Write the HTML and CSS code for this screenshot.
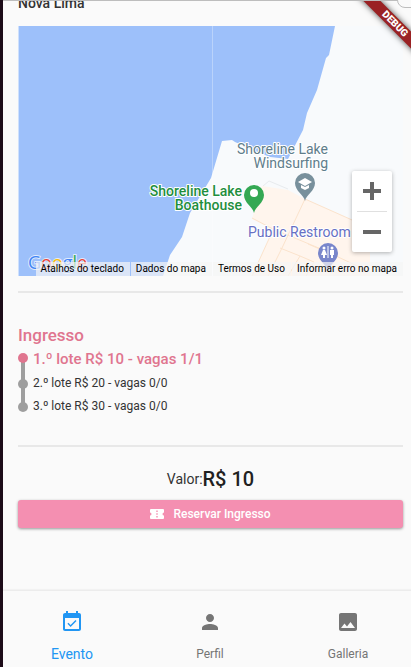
FILE: index.html
```html
<!DOCTYPE html>
<html lang="pt-BR">
<head>
<meta charset="utf-8">
<meta name="viewport" content="width=device-width, initial-scale=1">
<title>Evento</title>
<link rel="stylesheet" href="styles.css">
</head>
<body>
<div class="app">
  <span class="window-corner"></span>
  <div class="debug-clip"><span class="debug">DEBUG</span></div>
  <main class="content">
    <p class="city">Nova Lima</p>
    <section class="map" aria-label="Mapa">
      <svg class="map-canvas" viewBox="0 0 385 250" preserveAspectRatio="xMinYMin slice">
        <rect width="385" height="250" fill="#f8fafc"/>
        <path d="M0 0H317L311 29L308 32L299 64L289 87L285 104L270 133L252 131L235 124L217 116L214 114L204 115L193 152L184 167L172 187L164 211L152 229L145 250H0Z" fill="#9dc0fa"/>
        <path d="M244 160L270 164L287 173L352 202V250H234L255 204L234 193L240 170Z" fill="#fff5ed"/>
        <g fill="none" stroke="#fbe3cc">
          <path d="M234 192L255 203L320 230M287 173L264 222L250 250M255 204L234 250M287 173L352 202M262 222L282 230L270 250M282 230L296 236L288 250M290 218L318 230L352 246"/>
          <path d="M245 160L251 155L270 163" stroke="#e8ebee"/>
        </g>
        <path d="M194.500 0V250" stroke="#fff" stroke-opacity=".3"/>
        <path d="M.5 0V250" stroke="#fff" stroke-opacity=".5"/>
        <path d="M236 187c-1-6-10-10-10-18a10 10 0 0 1 20 0c0 8-9 12-10 18z" fill="#34a853"/>
        <circle cx="236" cy="167" r="4" fill="#fff"/>
        <path d="M287 175c-1-6-10-10-10-18a10 10 0 0 1 20 0c0 8-9 12-10 18z" fill="#78909c"/>
        <path d="M280 156l7-4 7 4-7 4zM283 159v3l4 2 4-2v-3l-4 2z" fill="#fff"/>
        <path d="M310 245c-1-6-10-10-10-18a10 10 0 0 1 20 0c0 8-9 12-10 18z" fill="#7986cb"/>
        <g fill="#fff"><circle cx="306" cy="222" r="1.500"/><circle cx="314" cy="222" r="1.500"/><path d="M305 224h2l2 5h-2v3h-2v-3h-2zM312 224h4v5h-1v3h-2v-3h-1zM309.500 220h1v12h-1z"/></g>
        <g class="place">
          <text x="310" y="128" fill="#607d8b" text-anchor="end">Shoreline Lake</text>
          <text x="310" y="142" fill="#607d8b" text-anchor="end">Windsurfing</text>
          <text class="strong" x="224" y="170" fill="#1e8e3e" text-anchor="end">Shoreline Lake</text>
          <text class="strong" x="224" y="184" fill="#1e8e3e" text-anchor="end">Boathouse</text>
          <text x="230" y="211" fill="#6670c4">Public Restroom</text>
        </g>
        <text class="google" x="10" y="243"><tspan fill="#4285f4">G</tspan><tspan fill="#ea4335">o</tspan><tspan fill="#fbbc04">o</tspan><tspan fill="#4285f4">g</tspan><tspan fill="#34a853">l</tspan><tspan fill="#ea4335">e</tspan></text>
      </svg>
      <div class="zoom">
        <button type="button" aria-label="Aumentar o zoom"><svg viewBox="0 0 18 18"><path d="M7 0h4v7h7v4h-7v7H7v-7H0V7h7z"/></svg></button>
        <button type="button" aria-label="Diminuir o zoom"><svg viewBox="0 0 18 18"><path d="M0 7h18v4H0z"/></svg></button>
      </div>
      <div class="map-links">
        <button type="button">Atalhos do teclado</button>
        <button type="button">Dados do mapa</button>
        <a href="#termos">Termos de Uso</a>
        <a href="#erro">Informar erro no mapa</a>
      </div>
    </section>
    <hr>
    <section class="tickets">
      <h2>Ingresso</h2>
      <ol class="lots">
        <li class="current">1.º lote R$ 10 - vagas 1/1</li>
        <li>2.º lote R$ 20 - vagas 0/0</li>
        <li>3.º lote R$ 30 - vagas 0/0</li>
      </ol>
    </section>
    <hr>
    <p class="price"><span>Valor:</span><strong>R$ 10</strong></p>
    <button class="reserve" type="button">
      <svg viewBox="0 0 14 12"><path fill="#fff" fill-rule="evenodd" d="M1 1h12q1 0 1 1v2.500a1.500 1.500 0 0 0 0 3V10q0 1-1 1H1q-1 0-1-1V7.500a1.500 1.500 0 0 0 0-3V2q0-1 1-1zM6.300 2.500v1.400h1.400V2.500zM6.300 5.300v1.400h1.400V5.300zM6.300 8.100v1.400h1.400V8.100z"/></svg>
      Reservar Ingresso
    </button>
  </main>
  <nav class="tabs">
    <a class="active" href="#evento"><svg viewBox="0 0 24 24"><path d="M16.530 11.060L15.470 10l-4.880 4.880-2.120-2.120-1.060 1.060L10.590 17l5.940-5.940zM19 3h-1V1h-2v2H8V1H6v2H5c-1.110 0-1.990.9-1.990 2L3 19c0 1.100.89 2 2 2h14c1.100 0 2-.9 2-2V5c0-1.100-.9-2-2-2zm0 16H5V8h14v11z"/></svg>Evento</a>
    <a href="#perfil"><svg viewBox="0 0 24 24"><path d="M12 12c2.210 0 4-1.790 4-4s-1.790-4-4-4-4 1.790-4 4 1.790 4 4 4zm0 2c-2.670 0-8 1.340-8 4v2h16v-2c0-2.660-5.330-4-8-4z"/></svg>Perfil</a>
    <a href="#galleria"><svg viewBox="0 0 24 24"><path d="M21 19V5c0-1.100-.9-2-2-2H5c-1.100 0-2 .9-2 2v14c0 1.100.9 2 2 2h14c1.100 0 2-.9 2-2zM8.500 13.500l2.500 3.010L14.500 12l4.500 6H5l3.500-4.500z"/></svg>Galleria</a>
  </nav>
</div>
</body>
</html>
```
FILE: styles.css
```css
* { box-sizing: border-box; }
body { margin: 0; background: #fafafa; color: #212121; font-family: Roboto, sans-serif; }
button { font: inherit; color: inherit; border: 0; padding: 0; cursor: pointer; }
a { color: inherit; text-decoration: none; }
p, h2, ol { margin: 0; padding: 0; }

.app {
  position: relative;
  display: flex;
  flex-direction: column;
  min-height: 100vh;
  overflow: hidden;
  border-left: 3px solid #1c0b18;
}
.app::before { content: ""; position: absolute; inset: 0 0 auto; height: 1px; background: #bdbdbd; z-index: 2; }
.window-corner {
  position: absolute;
  top: -12px;
  right: -8px;
  width: 22px;
  height: 20px;
  border: 1px solid #bdbdbd;
  border-radius: 8px;
  background: #fafafa;
  z-index: 4;
}
.debug-clip { position: absolute; top: 1px; right: 0; width: 80px; height: 80px; overflow: hidden; z-index: 3; pointer-events: none; }
.debug {
  position: absolute;
  top: 17px;
  right: -34px;
  width: 100px;
  background: #9a2224;
  box-shadow: 0 0 6px #000000b0;
  color: #fff;
  font-size: 10px;
  font-weight: 900;
  line-height: 12px;
  text-align: center;
  transform: rotate(45deg);
}

.content { flex: 1; padding: 0 8px 0 15px; }
.city { height: 26px; margin-top: -6px; margin-bottom: 6px; color: #333; font-size: 14px; font-weight: 500; line-height: 18px; }
.map { position: relative; height: 250px; overflow: hidden; }
.map-canvas { display: block; width: 100%; height: 100%; }
.place text { font-size: 14px; paint-order: stroke; stroke: #fff; stroke-width: 2px; stroke-linejoin: round; }
.place .strong { font-weight: 500; }
.google { font-family: "Open Sans", sans-serif; font-size: 18px; paint-order: stroke; stroke: #ffffffb0; stroke-width: 2px; }
.zoom {
  position: absolute;
  right: 11px;
  bottom: 24px;
  width: 40px;
  background: #fff;
  border-radius: 2px;
  box-shadow: 0 1px 4px #0000004d;
}
.zoom button { display: flex; align-items: center; justify-content: center; width: 100%; height: 40px; background: none; }
.zoom button + button { height: 41px; }
.zoom button + button::before { content: ""; position: absolute; top: 40px; left: 5px; right: 5px; height: 1px; background: #e0e0e0; }
.zoom svg { width: 18px; height: 18px; fill: #666; }
.map-links { position: absolute; right: 0; bottom: 0; display: flex; gap: 1px; color: #000; font-size: 10px; line-height: 14px; }
.map-links > * { padding: 0 6px 0 5px; background: #f5f5f5b3; white-space: nowrap; }

hr { height: 2px; margin: 15px 0 0; border: 0; background: #e8e8e8; }
.tickets { padding: 31px 0 12px; }
.tickets h2 { color: #e0758f; font-size: 17px; font-weight: 500; line-height: 22px; }
.lots { list-style: none; color: #333; font-size: 12px; line-height: 23px; }
.lots li { position: relative; padding-left: 15px; }
.lots li::before { content: ""; position: absolute; top: 7px; left: 0; width: 10px; height: 10px; border-radius: 50%; background: #9e9e9e; z-index: 1; }
.lots li:not(:last-child)::after { content: ""; position: absolute; top: 12px; left: 3px; width: 4px; height: 100%; background: #9e9e9e; }
.lots .current { color: #e0758f; font-size: 15px; font-weight: 500; line-height: 26px; }
.lots .current::before { background: #e0758f; }

.price { display: flex; align-items: center; justify-content: center; height: 30px; margin-top: 17px; font-size: 14px; }
.price span { color: #333; }
.price strong { font-size: 20px; font-weight: 500; }
.reserve {
  display: flex;
  align-items: center;
  justify-content: center;
  gap: 9px;
  width: 100%;
  height: 28px;
  margin-top: 6px;
  border-radius: 3px;
  background: #f48fb1;
  box-shadow: 0 1px 3px #00000066;
  color: #fff;
  font-size: 12px;
  font-weight: 500;
}
.reserve svg { width: 14px; height: 12px; }

.tabs { display: grid; grid-template-columns: repeat(3, 1fr); margin-right: -6px; border-top: 1px solid #ececec; box-shadow: 0 -1px 1px #00000008; color: #757575; }
.tabs a { display: flex; flex-direction: column; align-items: center; gap: 11px; padding: 19px 0 4px; font-size: 12px; line-height: 18px; }
.tabs svg { width: 24px; height: 24px; fill: currentColor; }
.tabs .active { color: #2196f3; font-size: 14px; }
```
